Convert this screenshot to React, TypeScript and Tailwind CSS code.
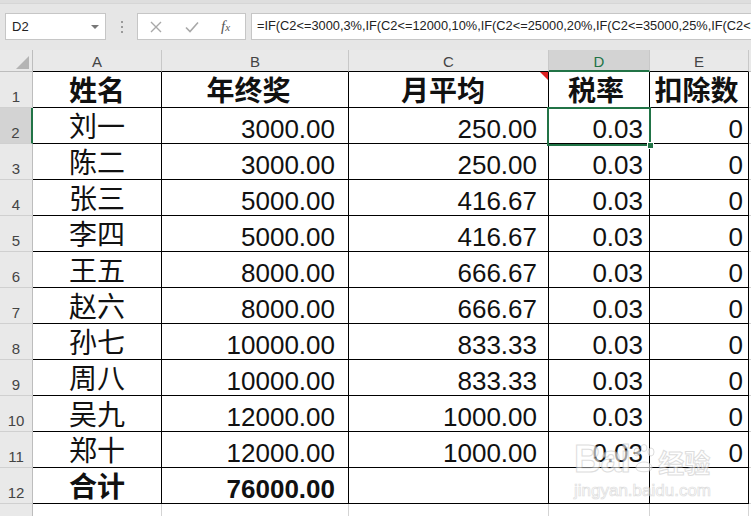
import React from "react";

type RowData = { n: number; a: string; b: string; c: string; d: string; e: string; bold?: boolean; header?: boolean };

const rows: RowData[] = [
  { n: 1, a: "姓名", b: "年终奖", c: "月平均", d: "税率", e: "扣除数", header: true },
  { n: 2, a: "刘一", b: "3000.00", c: "250.00", d: "0.03", e: "0" },
  { n: 3, a: "陈二", b: "3000.00", c: "250.00", d: "0.03", e: "0" },
  { n: 4, a: "张三", b: "5000.00", c: "416.67", d: "0.03", e: "0" },
  { n: 5, a: "李四", b: "5000.00", c: "416.67", d: "0.03", e: "0" },
  { n: 6, a: "王五", b: "8000.00", c: "666.67", d: "0.03", e: "0" },
  { n: 7, a: "赵六", b: "8000.00", c: "666.67", d: "0.03", e: "0" },
  { n: 8, a: "孙七", b: "10000.00", c: "833.33", d: "0.03", e: "0" },
  { n: 9, a: "周八", b: "10000.00", c: "833.33", d: "0.03", e: "0" },
  { n: 10, a: "吴九", b: "12000.00", c: "1000.00", d: "0.03", e: "0" },
  { n: 11, a: "郑十", b: "12000.00", c: "1000.00", d: "0.03", e: "0" },
  { n: 12, a: "合计", b: "76000.00", c: "", d: "", e: "", bold: true },
];

function RowHead({ n, selected }: { n: number; selected?: boolean }) {
  return (
    <div
      className={`w-[33px] h-full shrink-0 flex items-end justify-center pb-[3px] text-[15px] leading-none text-[#444] border-b border-b-[#d0d0d0] ${
        selected ? "bg-[#d3d3d3] border-r-2 border-r-[#217346]" : "bg-[#e9e9e9] border-r border-r-[#bdbdbd]"
      }`}
    >
      {n}
    </div>
  );
}

function Row({ r }: { r: RowData }) {
  const chinese = r.header || r.bold ? "text-[28px] font-bold" : "text-[28px]";
  const num = r.header
    ? "text-[28px] font-bold justify-center items-center pt-[4px]"
    : `text-[26px] justify-end items-end pb-[1px] ${r.bold ? "font-bold" : ""}`;
  return (
    <div className="flex h-[36px]">
      <RowHead n={r.n} selected={r.n === 2} />
      <div className={`w-[129px] shrink-0 flex items-center justify-center pt-[4px] border-r border-b border-black leading-none text-[#111] ${chinese}`}>
        {r.a}
      </div>
      <div className={`w-[187px] shrink-0 flex border-r border-b border-black leading-none text-[#111] pr-[13px] ${num}`}>
        {r.b}
      </div>
      <div className={`relative w-[200px] shrink-0 flex border-r border-b border-black leading-none text-[#111] pr-[11px] ${num}`}>
        {r.c}
        {r.header && (
          <div className="absolute right-0 top-0 w-0 h-0 border-t-[8px] border-t-[#e02020] border-l-[8px] border-l-transparent" />
        )}
      </div>
      <div className={`w-[101px] shrink-0 flex border-r border-b border-black leading-none text-[#111] pr-[6px] ${num}`}>
        {r.d}
      </div>
      <div className={`w-[99px] shrink-0 flex border-r border-b border-black leading-none text-[#111] pr-[5px] whitespace-nowrap ${num}`}>
        {r.e}
      </div>
      <div className="flex-1 border-b border-[#d4d4d4]" />
    </div>
  );
}

export default function App() {
  return (
    <div className="relative w-[751px] h-[516px] overflow-hidden bg-white font-['Liberation_Sans','Noto_Sans_CJK_SC',sans-serif]">
      {/* formula bar */}
      <div className="h-[50px] bg-[#e6e6e6] border-t-[3px] border-t-[#dedede] flex flex-col">
        <div className="h-[1px] bg-[#d6d6d6]" />
        <div className="mt-[9px] flex items-stretch h-[27px]">
          <div className="ml-[5px] w-[101px] bg-white border border-[#c6c6c6] flex items-center pl-[6px] pr-[6px] justify-between">
            <span className="text-[13px] text-[#222] leading-none">D2</span>
            <span className="w-0 h-0 border-l-[4px] border-r-[4px] border-t-[4px] border-l-transparent border-r-transparent border-t-[#777]" />
          </div>
          <div className="w-[31px] flex flex-col items-center justify-center gap-[3px]">
            <span className="w-[2px] h-[2px] bg-[#9a9a9a]" />
            <span className="w-[2px] h-[2px] bg-[#9a9a9a]" />
            <span className="w-[2px] h-[2px] bg-[#9a9a9a]" />
          </div>
          <div className="w-[109px] bg-white border border-[#c6c6c6] flex items-center">
            <svg className="ml-[12px]" width="12" height="12" viewBox="0 0 12 12">
              <path d="M1 1L11 11M11 1L1 11" stroke="#a8a8a8" strokeWidth="1.4" />
            </svg>
            <svg className="ml-[23px]" width="14" height="12" viewBox="0 0 14 12">
              <path d="M1 6.5L5 10.5L13 1.5" stroke="#a8a8a8" strokeWidth="1.6" fill="none" />
            </svg>
            <span className="ml-[22px] font-['Liberation_Serif',serif] italic text-[15px] leading-none text-[#555]">
              f<span className="text-[11px]">x</span>
            </span>
          </div>
          <div className="ml-[5px] flex-1 min-w-0 bg-white border border-[#c6c6c6] border-r-0 flex items-center pl-[5px] overflow-hidden">
            <span className="text-[12.8px] text-[#222] whitespace-nowrap leading-none">
              =IF(C2&lt;=3000,3%,IF(C2&lt;=12000,10%,IF(C2&lt;=25000,20%,IF(C2&lt;=35000,25%,IF(C2&lt;=
            </span>
          </div>
        </div>
      </div>

      {/* column headers */}
      <div className="flex h-[22px] bg-[#e9e9e9] text-[15px] leading-none text-[#444]">
        <div className="w-[33px] shrink-0 border-r border-[#bdbdbd] border-b border-b-[#bdbdbd] flex items-end justify-end pr-[3px] pb-[2px]">
          <span className="w-0 h-0 border-b-[13px] border-b-[#b4b4b4] border-l-[13px] border-l-transparent" />
        </div>
        <div className="w-[129px] shrink-0 border-r border-[#c8c8c8] border-b border-b-black flex items-center justify-center pt-[2px]">A</div>
        <div className="w-[187px] shrink-0 border-r border-[#c8c8c8] border-b border-b-black flex items-center justify-center pt-[2px]">B</div>
        <div className="w-[200px] shrink-0 border-r border-[#c8c8c8] border-b border-b-black flex items-center justify-center pt-[2px]">C</div>
        <div className="w-[101px] shrink-0 bg-[#d3d3d3] border-r border-[#c8c8c8] border-b-2 border-b-[#217346] flex items-center justify-center pt-[2px] text-[#217346]">D</div>
        <div className="w-[99px] shrink-0 border-r border-[#c8c8c8] border-b border-b-black flex items-center justify-center pt-[2px]">E</div>
        <div className="flex-1 border-b border-[#bdbdbd]" />
      </div>

      {/* rows */}
      {rows.map((r) => (
        <Row key={r.n} r={r} />
      ))}

      {/* row 13 partial */}
      <div className="flex h-[12px]">
        <div className="w-[33px] shrink-0 bg-[#e9e9e9] border-r border-[#bdbdbd]" />
        <div className="w-[129px] shrink-0 border-r border-[#d4d4d4]" />
        <div className="w-[187px] shrink-0 border-r border-[#d4d4d4]" />
        <div className="w-[200px] shrink-0 border-r border-[#d4d4d4]" />
        <div className="w-[101px] shrink-0 border-r border-[#d4d4d4]" />
        <div className="w-[99px] shrink-0 border-r border-[#d4d4d4]" />
      </div>

      {/* selection */}
      <div className="absolute left-[547px] top-[107px] w-[104px] h-[39px] border-2 border-[#217346] pointer-events-none" />
      <div className="absolute left-[647px] top-[142px] w-[7px] h-[7px] bg-[#217346] border border-white" />

      {/* watermark */}
      <div className="absolute left-[574px] top-[440px] pointer-events-none opacity-60">
        <div className="flex items-end leading-none text-white [-webkit-text-stroke:1px_#c8c8c8]">
          <span className="text-[38px] font-bold tracking-[-1px]">Bai</span>
          <svg width="26" height="30" viewBox="0 0 26 30" className="mb-[4px] mx-[1px]">
            <g fill="white" stroke="#c8c8c8" strokeWidth="1">
              <ellipse cx="6" cy="8" rx="3" ry="4" />
              <ellipse cx="13" cy="4" rx="3" ry="3.5" />
              <ellipse cx="20" cy="8" rx="3" ry="4" />
              <path d="M5 24 C5 16 21 16 21 24 C21 29 5 29 5 24Z" />
            </g>
          </svg>
          <span className="text-[26px] font-bold mb-[3px] font-['Noto_Sans_CJK_SC',sans-serif]">经验</span>
        </div>
        <div className="mt-[4px] text-[17px] leading-none text-white [-webkit-text-stroke:0.7px_#c8c8c8]">jingyan.baidu.com</div>
      </div>
    </div>
  );
}
